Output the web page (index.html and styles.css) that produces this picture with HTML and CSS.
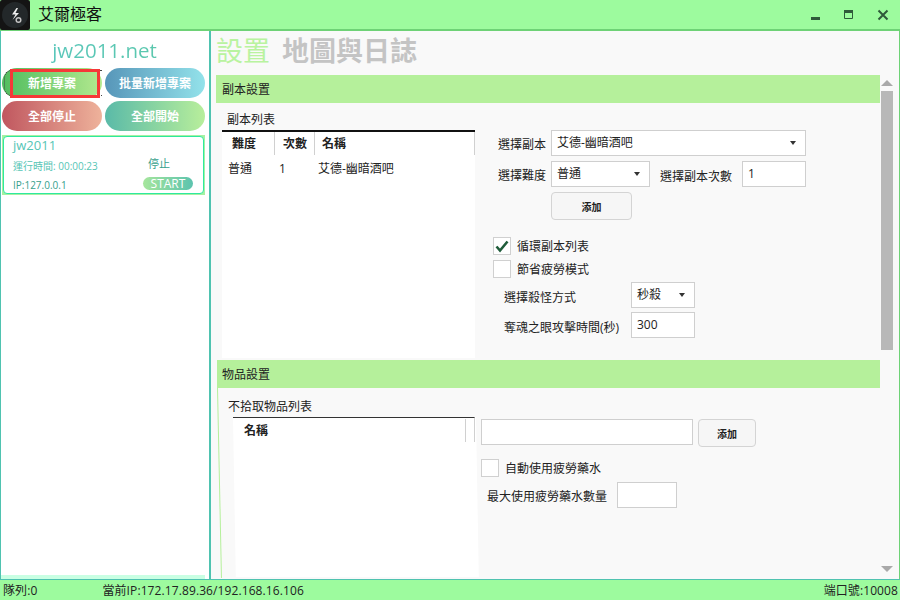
FILE: index.html
```html
<!DOCTYPE html>
<html lang="zh-Hant">
<head>
<meta charset="utf-8">
<title>艾爾極客</title>
<link rel="stylesheet" href="styles.css">
</head>
<body>
<div class="window">
  <header class="titlebar">
    <div class="logo">
      <svg width="30" height="30" viewBox="0 0 30 30"><circle cx="15" cy="15" r="13" fill="#23282a"/><path d="M16.5 8l-4.500 6.500h3.500l-3 5.500 6.500-7h-3.500l2.500-5z" fill="#eeeeee"/><circle cx="18.500" cy="20" r="2.300" fill="none" stroke="#c4c4c4" stroke-width="1.500"/></svg>
    </div>
    <div class="app-title">艾爾極客</div>
    <div class="win-controls">
      <svg width="110" height="30" viewBox="0 0 110 30">
        <rect x="21" y="17" width="9" height="3" fill="#2f5a3a"/>
        <path d="M54.500 10.500h8v8h-8z" fill="none" stroke="#2f5a3a"/><rect x="54" y="10" width="9" height="3" fill="#2f5a3a"/>
        <path d="M88.500 10.500l9 9M97.500 10.500l-9 9" stroke="#2f5a3a" stroke-width="2"/>
      </svg>
    </div>
  </header>
  <div class="middle">
    <aside class="sidebar">
      <div class="brand">jw2011.net</div>
      <div class="actions">
        <button class="pill pill-green">新增專案<span class="focus-dots"></span><span class="focus-red"></span></button>
        <button class="pill pill-blue">批量新增專案</button>
        <button class="pill pill-red">全部停止</button>
        <button class="pill pill-teal">全部開始</button>
      </div>
      <div class="card-wrap">
        <div class="card">
          <div class="card-name">jw2011</div>
          <div class="card-row card-mid"><span class="card-time">運行時間: 00:00:23</span><span class="card-stop">停止</span></div>
          <div class="card-row card-end"><span class="card-ip">IP:127.0.0.1</span><span class="start">START</span></div>
        </div>
      </div>
    </aside>
    <main class="main">
      <div class="content">
        <nav class="tabs"><span class="tab-on">設置</span><span class="tab-off">地圖與日誌</span></nav>
        <section>
          <h2 class="sec-head">副本設置</h2>
          <div class="sec-body sec-one">
            <div class="list-col">
              <div class="list-title">副本列表</div>
              <div class="table">
                <div class="thead"><span class="c1">難度</span><span class="c2">次數</span><span class="c3">名稱</span></div>
                <div class="trow"><span class="d1">普通</span><span class="d2">1</span><span class="d3">艾德-幽暗酒吧</span></div>
              </div>
            </div>
            <div class="form-col">
              <div class="row row-a"><label class="lbl-a">選擇副本</label><div class="field sel w255">艾德-幽暗酒吧<i class="caret"></i></div></div>
              <div class="row row-b"><label class="lbl-a">選擇難度</label><div class="field sel w99">普通<i class="caret"></i></div><label class="lbl-b">選擇副本次數</label><div class="field w64">1</div></div>
              <button class="btn btn-add">添加</button>
              <div class="check-row chk1"><span class="box"><svg width="16" height="16" viewBox="0 0 16 16"><path d="M2.500 8.500l3.500 4 7.500-9" fill="none" stroke="#1f5c3a" stroke-width="2.600"/></svg></span>循環副本列表</div>
              <div class="check-row chk2"><span class="box"></span>節省疲勞模式</div>
              <div class="row row-c"><label class="lbl-c">選擇殺怪方式</label><div class="field sel w64 tight">秒殺<i class="caret"></i></div></div>
              <div class="row row-d"><label class="lbl-c">奪魂之眼攻擊時間(秒)</label><div class="field w64">300</div></div>
            </div>
          </div>
        </section>
        <section class="sec-second">
          <h2 class="sec-head sec-head-b">物品設置</h2>
          <div class="sec-body sec-two">
            <div class="list2-col">
              <div class="list-title2">不拾取物品列表</div>
              <div class="list2"><span class="name2">名稱</span></div>
            </div>
            <div class="form2">
              <div class="row"><div class="field w212"></div><button class="btn btn-add2">添加</button></div>
              <div class="check-row chk3"><span class="box"></span>自動使用疲勞藥水</div>
              <div class="row row-max"><label class="lbl-max">最大使用疲勞藥水數量</label><div class="field w60"></div></div>
            </div>
          </div>
        </section>
      </div>
      <div class="scrollbar"><i class="arrow-up"></i><i class="thumb"></i><i class="arrow-down"></i></div>
    </main>
  </div>
  <footer class="status"><span class="st-queue">隊列:0</span><span class="st-ip">當前IP:172.17.89.36/192.168.16.106</span><span class="st-port">端口號:10008</span></footer>
</div>
</body>
</html>
```
FILE: styles.css
```css
* { box-sizing: border-box; }
html, body { margin: 0; padding: 0; }
body { font-family: "Open Sans", "Noto Sans CJK TC", sans-serif; font-size: 12px; color: #222; }
.window { width: 900px; height: 600px; display: flex; flex-direction: column; background: #f9f9f9; overflow: hidden; }
.titlebar { height: 31px; flex: none; display: flex; align-items: flex-start; background: #9dfb9e; border-bottom: 2px solid #6ed276; }
.logo { width: 30px; height: 30px; background: #141414; border-radius: 2px; flex: none; }
.logo svg { display: block; }
.app-title { margin-left: 8px; font-size: 16px; line-height: 29px; color: #111; }
.win-controls { margin-left: auto; height: 29px; }
.win-controls svg { display: block; }
.middle { flex: 1; display: flex; min-height: 0; border-right: 1px solid #6ed276; }
.sidebar { width: 211px; flex: none; border-left: 1px solid #4fc3b0; border-right: 2px solid #4fc3b0; display: flex; flex-direction: column; padding-left: 1px; background: linear-gradient(#c9ffe3, #c9ffe3) no-repeat 0 100% / 204px 4px, #fff; }
.brand { width: 205px; text-align: center; font-size: 20.500px; line-height: 28px; margin-top: 5px; background: linear-gradient(90deg, #58c6c0, #5cc8a8); -webkit-background-clip: text; background-clip: text; color: transparent; }
.actions { display: grid; grid-template-columns: 100px 100px; gap: 3px; margin-top: 4px; }
.pill { position: relative; height: 30px; border: 0; border-radius: 15px; padding: 0; font: bold 12px "Open Sans", "Noto Sans CJK TC", sans-serif; color: #fff; }
.pill-green { background: linear-gradient(90deg, #50bd5f, #b3e98f); }
.pill-blue { background: linear-gradient(90deg, #5796b9, #93e2ea); }
.pill-red { background: linear-gradient(90deg, #c0575f, #eeb29b); }
.pill-teal { background: linear-gradient(90deg, #5abaa8, #b8ee9b); }
.focus-dots { position: absolute; left: 2px; top: 2px; right: 0; bottom: 2px; border: 1px dotted #444; border-right: 0; border-radius: 8px 0 0 8px; }
.focus-red { position: absolute; left: 8px; top: 1px; width: 90px; height: 29px; border: 3px solid #f63838; }
.card-wrap { margin-top: 4px; width: 203px; height: 60px; padding: 1px; background: #a6f1a2; }
.card { height: 58px; background: #fff; border: 1px solid #2ee99f; border-radius: 4px; padding: 0 9px; color: #56c5b5; }
.card-name { font-size: 13px; line-height: 16px; }
.card-row { display: flex; justify-content: space-between; font-size: 10px; }
.card-mid { height: 20px; line-height: 20px; margin-top: 3px; padding-right: 24px; }
.card-stop { color: #37a08c; font-size: 11px; margin-top: -2px; }
.card-end { height: 15px; line-height: 16px; margin-top: 1px; margin-right: 1px; }
.card-ip { color: #37a08c; }
.start { width: 50px; height: 13px; line-height: 13px; border-radius: 7px; text-align: center; font-size: 12px; color: #fff; background: linear-gradient(90deg, #a6e69c, #5cc3ae); }
.main { flex: 1; min-width: 0; display: flex; padding-left: 5px; background: #f9f9f9; }
.content { width: 664px; flex: none; }
.tabs { height: 44px; display: flex; gap: 12px; font-size: 27px; line-height: 40px; }
.tab-on { color: #b9f3a0; }
.tab-off { color: #c4c4c4; font-weight: bold; }
.sec-head { margin: 0; height: 28px; line-height: 30px; background: #b5f09b; font-size: 12px; font-weight: normal; padding-left: 6px; color: #222; }
.sec-head-b { margin-left: 1px; padding-left: 5px; }
.sec-body { display: flex; }
.sec-one { height: 257px; padding-left: 6px; }
.list-col { width: 253px; flex: none; }
.list-title { height: 27px; line-height: 34px; padding-left: 5px; }
.table { height: 228px; background: #fff; border-top: 2px solid #111; }
.thead { display: flex; height: 23px; font-weight: bold; line-height: 23px; }
.thead span { border-right: 1px solid #d0d0d0; padding-left: 10px; }
.c1 { width: 53px; }
.c2 { width: 40px; padding-left: 8px !important; }
.c3 { width: 160px; padding-left: 7px !important; }
.trow { display: flex; margin-top: 4px; line-height: 20px; }
.d1 { width: 57px; padding-left: 6px; }
.d2 { width: 39px; }
.form-col { margin-left: 18px; width: 330px; padding-top: 27px; }
.row { display: flex; align-items: center; }
.row-a { padding-left: 5px; height: 26px; }
.row-b { padding-left: 5px; height: 26px; margin-top: 5px; }
.lbl-a { width: 53px; padding-top: 1px; }
.lbl-b { margin-left: 10px; width: 82px; padding-top: 3px; }
.field { height: 26px; border: 1px solid #cfcfcf; background: #fff; padding-left: 5px; line-height: 24px; position: relative; flex: none; }
.w255 { width: 255px; }
.w99 { width: 99px; }
.w64 { width: 64px; }
.w212 { width: 212px; }
.w60 { width: 60px; }
.caret { position: absolute; right: 9px; top: 10px; width: 0; height: 0; border: 3px solid transparent; border-top: 4px solid #333; border-bottom: 0; }
.btn { display: block; background: #f6f6f6; border: 1px solid #d4d4d4; border-radius: 4px; font: bold 10px "Open Sans", "Noto Sans CJK TC", sans-serif; color: #222; padding: 0; }
.btn-add { width: 81px; height: 28px; margin: 5px 0 0 58px; }
.check-row { display: flex; align-items: center; height: 18px; }
.box { width: 18px; height: 18px; flex: none; border: 1px solid #d0d0d0; background: #fff; margin-right: 6px; display: flex; align-items: center; justify-content: center; }
.chk1 { margin-top: 17px; }
.chk2 { margin-top: 5px; }
.row-c { margin-top: 4px; padding-left: 11px; }
.row-d { margin-top: 4px; padding-left: 11px; }
.lbl-c { width: 127px; padding-top: 3px; }
.sec-second { position: relative; }
.sec-second::before { content: ""; position: absolute; left: 1px; top: 28px; width: 1px; height: 190px; background: #b5f09b; transform: skewX(1.200deg); transform-origin: 0 0; }
.sec-two { height: 191px; }
.list2-col { width: 265px; flex: none; position: relative; }
.list-title2 { height: 29px; line-height: 38px; padding-left: 12px; }
.list2 { position: relative; margin-left: 17px; width: 242px; height: 160px; }
.list2::before { content: ""; position: absolute; left: 0; right: -1px; top: 0; bottom: 0; background: #fff; transform: skewX(1deg); transform-origin: 0 0; }
.list2::after { content: ""; position: absolute; left: 0; right: 0; top: 0; height: 24px; border-top: 1px solid #333; border-right: 1px solid #d0d0d0; background: linear-gradient(#d0d0d0, #d0d0d0) no-repeat 232px 1px / 1px 23px; }
.name2 { position: absolute; left: 11px; top: 3px; z-index: 1; font-weight: bold; line-height: 22px; }
.form2 { margin-left: 0; padding-top: 29px; }
.btn-add2 { width: 58px; height: 28px; margin-left: 5px; margin-top: 2px; }
.chk3 { margin-top: 12px; }
.chk3 .box { margin-right: 6px; }
.row-max { margin-top: 5px; padding-left: 6px; }
.lbl-max { width: 130px; padding-top: 1px; }
.scrollbar { width: 19px; flex: none; display: flex; flex-direction: column; align-items: center; padding-top: 49px; padding-right: 5px; }
.arrow-up { width: 0; height: 0; border: 6px solid transparent; border-bottom: 6px solid #a9a9a9; border-top: 0; }
.thumb { width: 12px; height: 259px; background: #b8b8b8; margin-top: 5px; }
.arrow-down { width: 0; height: 0; border: 6px solid transparent; border-top: 6px solid #a9a9a9; border-bottom: 0; margin-top: 216px; }
.status { height: 21px; flex: none; background: #9dfb9e; border-top: 1px solid #4fc3b0; display: flex; line-height: 22px; color: #222; padding: 0 2px 0 3px; letter-spacing: 0.100px; }
.st-ip { margin-left: 65px; }
.st-port { margin-left: auto; }
```
